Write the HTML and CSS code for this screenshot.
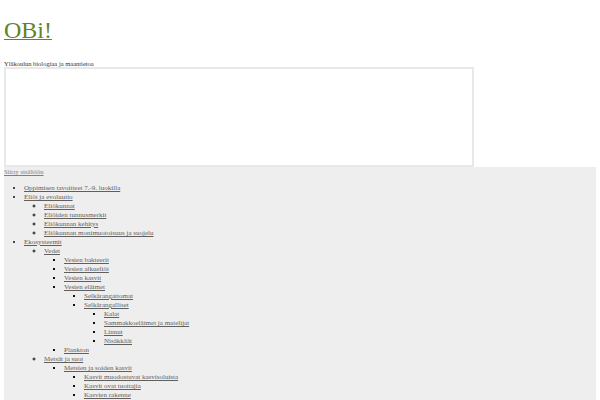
FILE: index.html
```html
<!DOCTYPE html>
<html>
<head>
<meta charset="utf-8">
<link rel="stylesheet" href="styles.css">
</head>
<body>
<header class="site-header">
  <h1 class="site-title"><a href="#">OBi!</a></h1>
  <p class="site-desc">Yläkoulun biologiaa ja maantietoa</p>
  <div class="header-box"></div>
</header>
<div class="main">
  <a class="skip" href="#">Siirry sisältöön</a>
  <ul class="menu">
    <li><a href="#">Oppimisen tavoitteet 7.-9. luokilla</a></li>
    <li><a href="#">Eliöt ja evoluutio</a>
      <ul>
        <li><a href="#">Eliökunnat</a></li>
        <li><a href="#">Eliöiden tunnusmerkit</a></li>
        <li><a href="#">Eliökunnan kehitys</a></li>
        <li><a href="#">Eliökunnan monimuotoisuus ja suojelu</a></li>
      </ul>
    </li>
    <li><a href="#">Ekosysteemit</a>
      <ul>
        <li><a href="#">Vedet</a>
          <ul>
            <li><a href="#">Vesien bakteerit</a></li>
            <li><a href="#">Vesien alkueliöt</a></li>
            <li><a href="#">Vesien kasvit</a></li>
            <li><a href="#">Vesien eläimet</a>
              <ul>
                <li><a href="#">Selkärangattomat</a></li>
                <li><a href="#">Selkärangalliset</a>
                  <ul>
                    <li><a href="#">Kalat</a></li>
                    <li><a href="#">Sammakkoeläimet ja matelijat</a></li>
                    <li><a href="#">Linnut</a></li>
                    <li><a href="#">Nisäkkäät</a></li>
                  </ul>
                </li>
              </ul>
            </li>
            <li><a href="#">Plankton</a></li>
          </ul>
        </li>
        <li><a href="#">Metsät ja suot</a>
          <ul>
            <li><a href="#">Metsien ja soiden kasvit</a>
              <ul>
                <li><a href="#">Kasvit muodostuvat kasvisoluista</a></li>
                <li><a href="#">Kasvit ovat tuottajia</a></li>
                <li><a href="#">Kasvien rakenne</a></li>
              </ul>
            </li>
          </ul>
        </li>
      </ul>
    </li>
  </ul>
</div>
</body>
</html>
```
FILE: styles.css
```css
html, body {
  margin: 0;
  padding: 0;
  background: #ffffff;
}
body {
  padding: 0 4px;
  font-family: "Liberation Serif", "Times New Roman", serif;
  color: #222;
  overflow: hidden;
  height: 400px;
}
.site-header {
  padding-top: 16px;
}
.site-title {
  margin: 0;
  font-size: 24px;
  font-weight: normal;
  line-height: 28px;
}
.site-title a {
  color: #66821f;
  text-decoration: underline;
  text-decoration-thickness: 1px;
}
.site-desc {
  margin: 16px 0 0;
  font-size: 6.5px;
  line-height: 7px;
  color: #333;
}
.header-box {
  width: 466px;
  height: 96px;
  border: 2px solid #e8e8e8;
  background: #fff;
}
.main {
  background: #eeeeee;
  font-size: 7px;
  line-height: 9px;
  min-height: 300px;
}
.skip {
  display: block;
  font-size: 6.5px;
  color: #808080;
  line-height: 9px;
}
.menu, .menu ul {
  margin: 0;
  padding-left: 20px;
}
.menu {
  margin-top: 7px;
}
.menu li {
  font-size: 8px;
  line-height: 9px;
}
.menu li::marker {
  color: #111;
}
.menu a {
  font-size: 7px;
  line-height: 8px;
  color: #5f5f5f;
}
.menu ul { list-style-type: circle; }
.menu ul ul { list-style-type: square; }
```
